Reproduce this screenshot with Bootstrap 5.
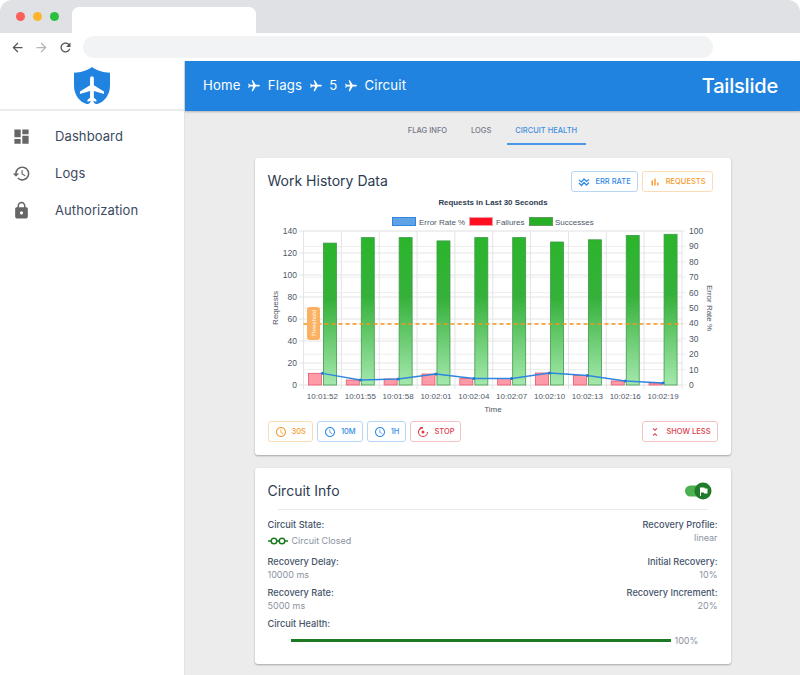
<!DOCTYPE html>
<html lang="en">
<head>
  <meta charset="UTF-8">
  <title>Tailslide</title>
  <link href="https://cdn.jsdelivr.net/npm/bootstrap@5.3.3/dist/css/bootstrap.min.css" rel="stylesheet">
  <style>
    html, body { height: 675px; overflow: hidden; background: #fff; }
    body { font-family: Inter, "Noto Sans", sans-serif; color: #2d3b50; }
    .frame { height: 675px; overflow: hidden; border-radius: 12px 12px 0 0; }
    .tabstrip { height: 33px; background: #dfe1e5; padding: 7px 0 0 72px; position: relative; }
    .dots { position: absolute; left: 16px; top: 12px; }
    .dots span { width: 9px; height: 9px; border-radius: 50%; display: block; }
    .tabshape { width: 184px; height: 26px; background: #fff; border-radius: 7px 7px 0 0; }
    .urlrow { height: 28px; padding-left: 10px; gap: 9px; background: #fff; }
    .urlrow svg { width: 15px; height: 15px; }
    .urlfield { width: 630px; height: 22px; margin-left: 1px; background: #f1f3f4; border-radius: 11px; }
    .app { height: 614px; }
    .side { width: 185px; background: #fff; border-right: 1px solid #e2e2e2; }
    .sidelogo { height: 50px; border-bottom: 2px solid #ececec; }
    .sidenav { padding-top: 7px; }
    .sidelink { height: 37px; padding-left: 12px; font-size: 13px; color: #3a4960; letter-spacing: .1px; }
    .sidelink svg { width: 19px; height: 19px; fill: #666; margin-right: 24px; }
    .mainarea { background: #ececec; min-width: 0; }
    .topblue { height: 50px; background: #2083e0; color: #fff; padding: 0 22px 0 18px; box-shadow: 0 1px 2px rgba(0,0,0,.25); }
    .crumbs { font-size: 13.2px; letter-spacing: .2px; gap: 6.5px; }
    .crumbs svg { width: 14px; height: 14px; fill: #fff; transform: rotate(90deg); }
    .brandname { font-size: 20px; font-weight: 500; letter-spacing: -.2px; }
    .tabrow { height: 34px; gap: 7px; }
    .tablink { font-size: 7.5px; font-weight: 500; color: #778; padding: 0 8.5px; line-height: 40px; height: 34px; }
    .tablink.on { color: #3f8fe0; border-bottom: 2px solid #4b97e3; }
    .panel { width: 476px; margin: 13px auto 0; border: 0; border-radius: 3px; box-shadow: 0 1px 2px rgba(0,0,0,.3); }
    .panelbody { padding: 13px 13px 13px; }
    .panelbody2 { padding: 14px 13px 17px; }
    .paneltitle { font-size: 14px; font-weight: 400; margin: 0; color: #2d3b50; }
    .mini { font-size: 7.5px; font-weight: 500; height: 21px; padding: 0 6px; border-radius: 3px; background: #fff; display: inline-flex; align-items: center; gap: 5px; border: 1px solid; }
    .mini svg { width: 12px; height: 12px; fill: currentColor; }
    .tint-blue { color: #2f8ae6; border-color: #b7d6f5; }
    .tint-orange { color: #f59a2e; border-color: #fbdcb6; }
    .tint-red { color: #dd3b4b; border-color: #f3c1c6; }
    .toprightbtns { margin-right: 5px; }
    .chartbox { display: block; width: 476px; height: 220px; margin: 3px -13px 6px; }
    .chartbox text { font-family: "Liberation Sans", Arial, sans-serif; }
    .lbl { font-size: 9.2px; font-weight: 500; color: #46546a; line-height: 13px; }
    .val { font-size: 9px; color: #8a93a0; line-height: 13px; }
    .closedval { margin-top: 3px; }
    .rule { height: 1px; background: #e9e9e9; margin: 9px 10px 8px; }
    .firstgap { margin-top: 8px; }
    .rowgap5 { margin-top: 5px; }
    .healthbar { height: 2.5px; background: #1b7a22; width: 380px; margin-left: 23px; }
    .togglepad { margin-right: 6px; }
  </style>
</head>
<body>
<div class="frame d-flex flex-column">
  <div class="tabstrip">
    <div class="dots d-flex gap-2">
      <span style="background:#fb5f57"></span><span style="background:#fdb42e"></span><span style="background:#29c03f"></span>
    </div>
    <div class="tabshape"></div>
  </div>
  <div class="urlrow d-flex align-items-center">
    <svg viewBox="0 0 24 24" fill="#555"><path d="M20 11H7.83l5.59-5.59L12 4l-8 8 8 8 1.41-1.41L7.83 13H20v-2z"/></svg>
    <svg viewBox="0 0 24 24" fill="#b5b5b5"><path d="M12 4l-1.41 1.41L16.17 11H4v2h12.17l-5.58 5.59L12 20l8-8z"/></svg>
    <svg viewBox="0 0 24 24" fill="#555"><path d="M17.65 6.35C16.2 4.9 14.21 4 12 4c-4.42 0-7.99 3.58-7.99 8s3.57 8 7.99 8c3.73 0 6.84-2.55 7.73-6h-2.08c-.82 2.33-3.04 4-5.65 4-3.31 0-6-2.69-6-6s2.69-6 6-6c1.66 0 3.14.69 4.22 1.78L13 11h7V4l-2.35 2.35z"/></svg>
    <div class="urlfield"></div>
  </div>
  <div class="app d-flex">
    <div class="side flex-shrink-0">
      <div class="sidelogo d-flex justify-content-center align-items-center">
        <svg width="36" height="37" viewBox="0 0 37 38">
          <path d="M18.5 0C14 3.5 7 5.5 0 6v13c0 10 6 17 13 19 2 .5 4-1 4-3v-4h3v4c0 2 2 3.500 4 3 7-2 13-9 13-19V6C30 5.500 23 3.500 18.500 0z" fill="#2083e0"/>
          <path transform="translate(3.500 7) scale(1.3)" d="M21 16v-2l-8-5V3.500c0-.83-.67-1.500-1.500-1.500S10 2.670 10 3.500V9l-8 5v2l8-2.500V19l-2 1.500V22l3.500-1 3.500 1v-1.500L13 19v-5.500l8 2.500z" fill="#fff"/>
        </svg>
      </div>
      <nav class="nav flex-column sidenav">
        <a class="sidelink d-flex align-items-center text-decoration-none" href="#">
          <svg viewBox="0 0 24 24"><path d="M3 13h8V3H3v10zm0 8h8v-6H3v6zm10 0h8V11h-8v10zm0-18v6h8V3h-8z"/></svg>Dashboard
        </a>
        <a class="sidelink d-flex align-items-center text-decoration-none" href="#">
          <svg viewBox="0 0 24 24"><path d="M13 3c-4.970 0-9 4.030-9 9H1l3.890 3.890.07.14L9 12H6c0-3.870 3.130-7 7-7s7 3.130 7 7-3.130 7-7 7c-1.930 0-3.680-.79-4.940-2.060l-1.420 1.420C8.270 19.990 10.510 21 13 21c4.970 0 9-4.030 9-9s-4.030-9-9-9zm-1 5v5l4.280 2.540.72-1.210-3.500-2.080V8H12z"/></svg>Logs
        </a>
        <a class="sidelink d-flex align-items-center text-decoration-none" href="#">
          <svg viewBox="0 0 24 24"><path d="M18 8h-1V6c0-2.760-2.240-5-5-5S7 3.240 7 6v2H6c-1.100 0-2 .9-2 2v10c0 1.100.9 2 2 2h12c1.100 0 2-.9 2-2V10c0-1.100-.9-2-2-2zm-6 9c-1.100 0-2-.9-2-2s.9-2 2-2 2 .9 2 2-.9 2-2 2zm3.100-9H8.900V6c0-1.710 1.390-3.100 3.100-3.100 1.710 0 3.100 1.390 3.100 3.100v2z"/></svg>Authorization
        </a>
      </nav>
    </div>
    <div class="mainarea flex-grow-1">
      <div class="topblue d-flex justify-content-between align-items-center">
        <div class="crumbs d-flex align-items-center">
          <span>Home</span>
          <svg viewBox="0 0 24 24"><path d="M21 16v-2l-8-5V3.500c0-.83-.67-1.500-1.500-1.500S10 2.670 10 3.500V9l-8 5v2l8-2.500V19l-2 1.500V22l3.500-1 3.500 1v-1.500L13 19v-5.500l8 2.500z"/></svg>
          <span>Flags</span>
          <svg viewBox="0 0 24 24"><path d="M21 16v-2l-8-5V3.500c0-.83-.67-1.500-1.500-1.500S10 2.670 10 3.500V9l-8 5v2l8-2.500V19l-2 1.500V22l3.500-1 3.500 1v-1.500L13 19v-5.500l8 2.500z"/></svg>
          <span>5</span>
          <svg viewBox="0 0 24 24"><path d="M21 16v-2l-8-5V3.500c0-.83-.67-1.500-1.500-1.500S10 2.670 10 3.500V9l-8 5v2l8-2.500V19l-2 1.500V22l3.500-1 3.500 1v-1.500L13 19v-5.500l8 2.500z"/></svg>
          <span>Circuit</span>
        </div>
        <div class="brandname">Tailslide</div>
      </div>
      <div class="tabrow d-flex justify-content-center">
        <a class="tablink text-decoration-none" href="#">FLAG INFO</a>
        <a class="tablink text-decoration-none" href="#">LOGS</a>
        <a class="tablink on text-decoration-none" href="#">CIRCUIT HEALTH</a>
      </div>

      <div class="card panel">
        <div class="card-body panelbody">
          <div class="d-flex justify-content-between align-items-center">
            <h5 class="paneltitle">Work History Data</h5>
            <div class="d-flex gap-1 toprightbtns">
              <button class="mini tint-blue"><svg viewBox="0 0 24 24" fill="none" stroke="currentColor" stroke-width="2.500" style="fill:none"><path d="M2 8l5 4 5-6 5 5 5-4M2 14l5 5 5-6 5 5 5-5"/></svg>ERR RATE</button>
              <button class="mini tint-orange"><svg viewBox="0 0 24 24"><path d="M5 9.200h3V19H5zM10.600 5h2.800v14h-2.800zm5.600 8H19v6h-2.800z"/></svg>REQUESTS</button>
            </div>
          </div>
          <svg class="chartbox" id="chart" viewBox="255 195 476 220"></svg>
          <div class="d-flex justify-content-between">
            <div class="d-flex gap-1">
              <button class="mini tint-orange"><svg viewBox="0 0 24 24"><path d="M11.990 2C6.470 2 2 6.480 2 12s4.470 10 9.990 10C17.520 22 22 17.520 22 12S17.520 2 11.990 2zM12 20c-4.420 0-8-3.580-8-8s3.580-8 8-8 8 3.580 8 8-3.580 8-8 8zm.5-13H11v6l5.250 3.150.75-1.230-4.500-2.670z"/></svg>30S</button>
              <button class="mini tint-blue"><svg viewBox="0 0 24 24"><path d="M11.990 2C6.470 2 2 6.480 2 12s4.470 10 9.990 10C17.520 22 22 17.520 22 12S17.520 2 11.990 2zM12 20c-4.420 0-8-3.580-8-8s3.580-8 8-8 8 3.580 8 8-3.580 8-8 8zm.5-13H11v6l5.250 3.150.75-1.230-4.500-2.670z"/></svg>10M</button>
              <button class="mini tint-blue"><svg viewBox="0 0 24 24"><path d="M11.990 2C6.470 2 2 6.480 2 12s4.470 10 9.990 10C17.520 22 22 17.520 22 12S17.520 2 11.990 2zM12 20c-4.420 0-8-3.580-8-8s3.580-8 8-8 8 3.580 8 8-3.580 8-8 8zm.5-13H11v6l5.250 3.150.75-1.230-4.500-2.670z"/></svg>1H</button>
              <button class="mini tint-red"><svg viewBox="0 0 24 24"><path d="M12 2v3c-4 0-8 3-8 7a8 8 0 0 0 16 0h2A10 10 0 1 1 7 3.300L5 2h7z"/><circle cx="12" cy="12" r="3"/></svg>STOP</button>
            </div>
            <button class="mini tint-red"><svg viewBox="0 0 24 24"><path d="M7.410 18.590L8.830 20 12 16.830 15.170 20l1.410-1.410L12 14l-4.590 4.590zm9.180-13.180L15.170 4 12 7.170 8.830 4 7.410 5.410 12 10l4.590-4.590z"/></svg>SHOW LESS</button>
          </div>
        </div>
      </div>

      <div class="card panel">
        <div class="card-body panelbody2">
          <div class="d-flex justify-content-between align-items-center">
            <h5 class="paneltitle">Circuit Info</h5>
            <svg class="togglepad" width="27" height="18" viewBox="0 0 27 18">
              <rect x="0" y="3.500" width="22" height="11" rx="5.500" fill="#4caf50"/>
              <circle cx="18" cy="9" r="8.500" fill="#1f7a2a"/>
              <path transform="translate(12.500 3.500) scale(.5)" d="M14.400 6L14 4H5v17h2v-7h5.600l.4 2h7V6z" fill="#fff"/>
            </svg>
          </div>
          <div class="rule"></div>
          <div class="d-flex justify-content-between">
            <div>
              <div class="lbl">Circuit State:</div>
              <div class="val d-flex align-items-center gap-1 closedval">
                <svg width="20" height="8" viewBox="0 0 20 8" fill="none" stroke="#1b7a22" stroke-width="1.500"><path d="M0 4h3M9 4h2M17 4h3"/><circle cx="6" cy="4" r="2.800"/><circle cx="14" cy="4" r="2.800"/></svg>
                Circuit Closed
              </div>
            </div>
            <div class="text-end">
              <div class="lbl">Recovery Profile:</div>
              <div class="val">linear</div>
            </div>
          </div>
          <div class="d-flex justify-content-between firstgap">
            <div><div class="lbl">Recovery Delay:</div><div class="val">10000 ms</div></div>
            <div class="text-end"><div class="lbl">Initial Recovery:</div><div class="val">10%</div></div>
          </div>
          <div class="d-flex justify-content-between rowgap5">
            <div><div class="lbl">Recovery Rate:</div><div class="val">5000 ms</div></div>
            <div class="text-end"><div class="lbl">Recovery Increment:</div><div class="val">20%</div></div>
          </div>
          <div class="lbl rowgap5">Circuit Health:</div>
          <div class="d-flex align-items-center gap-1 mt-1">
            <div class="healthbar"></div><span class="val">100%</span>
          </div>
        </div>
      </div>
    </div>
  </div>
</div>

<script src="https://cdn.jsdelivr.net/npm/bootstrap@5.3.3/dist/js/bootstrap.bundle.min.js"></script>
<script>
  const horas = ['10:01:52','10:01:55','10:01:58','10:02:01','10:02:04','10:02:07','10:02:10','10:02:13','10:02:16','10:02:19'];
  const ok = [129,134,134,131,134,134,130,132,136,137];
  const errY = [373.300,380,379,374,378.500,378.500,373,375.500,381,383];
  const left = 303.500, right = 682, top0 = 231, base = 385, paso = (right - left) / 10, k = 154 / 140;
  const gris = '#4d5868';
  let s = `<defs><linearGradient id="verde" x1="0" y1="0" x2="0" y2="1"><stop offset="0" stop-color="#2bb52b"/><stop offset=".4" stop-color="#35b13a"/><stop offset="1" stop-color="#a5e8ae"/></linearGradient></defs>`;

  // grid
  for (let v = 0; v <= 140; v += 20) {
    const y = base - v * k;
    s += `<line x1="299" x2="${right}" y1="${y}" y2="${y}" stroke="#e4e4e4"/>`;
    s += `<text x="297" y="${y + 3}" text-anchor="end" font-size="8.500" fill="${gris}">${v}</text>`;
  }
  for (let v = 0; v <= 100; v += 10) {
    const y = base - v * 1.54;
    s += `<line x1="${left}" x2="686" y1="${y}" y2="${y}" stroke="#eeeeee"/>`;
    s += `<text x="689" y="${y + 3}" font-size="8.500" fill="${gris}">${v}</text>`;
  }
  for (let i = 0; i <= 10; i++) {
    const x = left + i * paso;
    s += `<line x1="${x}" x2="${x}" y1="${top0}" y2="${base + 4}" stroke="#e4e4e4"/>`;
  }

  // bars
  horas.forEach((h, i) => {
    const c = left + (i + .5) * paso;
    const yf = errY[i], ys = base - ok[i] * k;
    s += `<rect x="${c - 14}" y="${yf}" width="13" height="${base - yf}" fill="#ff9aa8" stroke="#e4566c" stroke-width=".8"/>`;
    s += `<rect x="${c + 1}" y="${ys}" width="13" height="${base - ys}" fill="url(#verde)" stroke="#3f9a4a" stroke-width=".8"/>`;
    s += `<text x="${c}" y="399" text-anchor="middle" font-size="8" fill="${gris}">${h}</text>`;
  });

  // error rate line
  const pts = errY.map((y, i) => [left + (i + .5) * paso, y]);
  s += `<polyline points="${pts.map(p => p.join(',')).join(' ')}" fill="none" stroke="#2f86e0" stroke-width="1.300"/>`;
  pts.forEach(p => { s += `<circle cx="${p[0]}" cy="${p[1]}" r="1.500" fill="#2079d8"/>`; });

  // threshold
  s += `<line x1="${left}" x2="${right}" y1="324" y2="324" stroke="#f7941d" stroke-width="1.500" stroke-dasharray="4 3"/>`;
  s += `<rect x="307" y="307" width="13" height="33" rx="3" fill="#fbb15f"/>`;
  s += `<text transform="translate(316 323.500) rotate(-90)" text-anchor="middle" font-size="6" fill="#fff">Threshold</text>`;

  // titles and legend
  s += `<text x="493" y="205" text-anchor="middle" font-size="7.900" font-weight="700" fill="#2d3b50">Requests in Last 30 Seconds</text>`;
  s += `<rect x="392.500" y="217.500" width="23" height="8" fill="#5fa3e6" stroke="#2f86e0"/><text x="419" y="225" font-size="8" fill="${gris}">Error Rate %</text>`;
  s += `<rect x="469.500" y="217.500" width="23" height="8" fill="#ff0f1f" stroke="#f29aa3"/><text x="496" y="225" font-size="8" fill="${gris}">Failures</text>`;
  s += `<rect x="529.500" y="217.500" width="23" height="8" fill="#27b024" stroke="#5f9a5f"/><text x="555" y="225" font-size="8" fill="${gris}">Successes</text>`;
  s += `<text x="493" y="412" text-anchor="middle" font-size="8" fill="${gris}">Time</text>`;
  s += `<text transform="translate(278 308) rotate(-90)" text-anchor="middle" font-size="8" fill="${gris}">Requests</text>`;
  s += `<text transform="translate(707 308) rotate(90)" text-anchor="middle" font-size="8" fill="${gris}">Error Rate %</text>`;

  document.getElementById('chart').innerHTML = s;
</script>
</body>
</html>
